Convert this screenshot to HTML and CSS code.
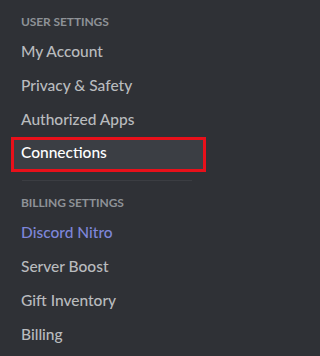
FILE: index.html
```html
<!DOCTYPE html>
<html lang="en">
<head>
<meta charset="utf-8">
<title>User Settings</title>
<link rel="stylesheet" href="styles.css">
</head>
<body>
<nav class="sidebar">
  <div class="header">User Settings</div>
  <div class="item">My Account</div>
  <div class="item">Privacy &amp; Safety</div>
  <div class="item">Authorized Apps</div>
  <div class="item selected">Connections</div>
  <div class="separator"></div>
  <div class="header">Billing Settings</div>
  <div class="item nitro">Discord Nitro</div>
  <div class="item">Server Boost</div>
  <div class="item">Gift Inventory</div>
  <div class="item">Billing</div>
</nav>
</body>
</html>
```

FILE: styles.css
```css
html, body {
  margin: 0;
  padding: 0;
  background: #2f3136;
  width: 216px;
  height: 356px;
  overflow: hidden;
}

.sidebar {
  display: flex;
  flex-direction: column;
  padding: 8px 10px 0 11px;
  font-family: Lato, "Open Sans", sans-serif;
}

.header {
  padding: 6px 10px 4px;
  margin-bottom: 1px;
  font-size: 12px;
  line-height: 16px;
  font-weight: 700;
  text-transform: uppercase;
  color: #8e9297;
  letter-spacing: -0.1px;
}

.item {
  padding: 6px 10px;
  margin-bottom: 2px;
  font-size: 15.5px;
  line-height: 20px;
  font-weight: 500;
  color: #b9bbbe;
  border-radius: 4px;
}

.item.selected {
  background: #3b3e44;
  color: #ffffff;
  border: 3px solid #e8101a;
  border-radius: 0;
  padding: 2px 7px 7px;
}

.item.nitro {
  color: #7e86d9;
}

.separator {
  height: 1px;
  margin: 6px 14px 8px 11px;
  background: #3b3d42;
}
```
